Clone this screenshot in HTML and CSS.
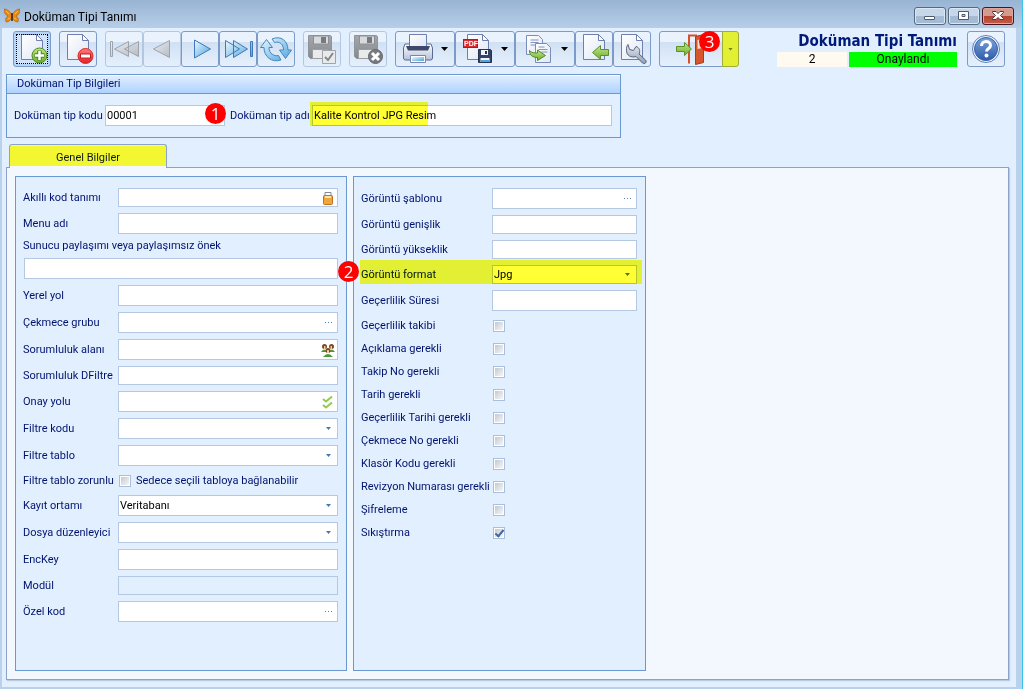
FILE: index.html
```html
<!DOCTYPE html>
<html lang="tr">
<head>
<meta charset="utf-8">
<title>Doküman Tipi Tanımı</title>
<link rel="stylesheet" href="styles.css">
</head>
<body>
<svg class="defs" aria-hidden="true">
  <defs>
    <linearGradient id="gBlue" x1="0" y1="0" x2="1" y2="1"><stop offset="0" stop-color="#eef9ff"/><stop offset="1" stop-color="#4aa3df"/></linearGradient>
    <linearGradient id="gGray" x1="0" y1="0" x2="1" y2="1"><stop offset="0" stop-color="#eceef1"/><stop offset="1" stop-color="#b5bbc3"/></linearGradient>
    <linearGradient id="gPage" x1="0" y1="0" x2="1" y2="1"><stop offset="0" stop-color="#ffffff"/><stop offset="1" stop-color="#dfe6f4"/></linearGradient>
    <linearGradient id="gGreen" x1="0" y1="0" x2="0" y2="1"><stop offset="0" stop-color="#c3e58d"/><stop offset="1" stop-color="#6cae2c"/></linearGradient>
    <linearGradient id="gRed" x1="0" y1="0" x2="0" y2="1"><stop offset="0" stop-color="#ff7b7b"/><stop offset="1" stop-color="#e31f25"/></linearGradient>
    <linearGradient id="gDisk" x1="0" y1="0" x2="0" y2="1"><stop offset="0" stop-color="#a4a8ac"/><stop offset="1" stop-color="#85898d"/></linearGradient>
    <linearGradient id="gSteel" x1="0" y1="0" x2="0" y2="1"><stop offset="0" stop-color="#ffffff"/><stop offset="1" stop-color="#b4c0da"/></linearGradient>
    <linearGradient id="gWrench" x1="0" y1="0" x2="0" y2="1"><stop offset="0" stop-color="#e6ebf2"/><stop offset="1" stop-color="#8e9db4"/></linearGradient>
    <linearGradient id="gHelp" x1="0" y1="0" x2="0" y2="1"><stop offset="0" stop-color="#7fa3d8"/><stop offset="1" stop-color="#2a5cab"/></linearGradient>
    <symbol id="page" viewBox="0 0 32 32"><path d="M5.500 1.500h15l6 6v19h-21z" fill="url(#gPage)" stroke="#6d7fae"/><path d="M20.500 1.500v6h6z" fill="#fff" stroke="#6d7fae"/></symbol>
    <symbol id="disk" viewBox="0 0 32 32"><path d="M2.500 2.500h22l1 1v22h-21l-2-2z" fill="url(#gDisk)" stroke="#909498"/><path d="M7.500 3h15v8h-15z" fill="#d8dadd" stroke="#8b8f93"/><path d="M15 4h5v6h-5z" fill="#777b80"/><path d="M6.500 16.500h15v9h-15z" fill="#e8eaec" stroke="#9a9ea2"/></symbol>
  </defs>
</svg>
<div class="window">
  <header class="titlebar">
    <svg class="logo" viewBox="0 0 16 16"><path d="M8 7C6 3 3 1 0 1c0 3 1 6 4 7-2 1-3 3-2 6 3 0 5-2 6-5 1 3 3 5 6 5 1-3 0-5-2-6 3-1 4-4 4-7-3 0-6 2-8 6z" fill="#e98a17" stroke="#a85a0c" stroke-width=".6"/><path d="M2 3l3 3M14 3l-3 3M4 11l2-1M12 11l-2-1" fill="none" stroke="#ffc24a"/><path d="M8 5v8" stroke="#35210e" stroke-width="1.500"/></svg>
    <h1 class="title">Doküman Tipi Tanımı</h1>
    <div class="winbtns">
      <button class="winbtn" aria-label="Simge durumuna küçült"><svg viewBox="0 0 30 16"><rect x="9.500" y="8.500" width="10" height="3" rx=".5" fill="#fff" stroke="#4b5a70"/></svg></button>
      <button class="winbtn" aria-label="Ekranı kapla"><svg viewBox="0 0 30 16"><path d="M9.500 3.500h10v8h-10zM13 6.500v2h3v-2z" fill="#fff" fill-rule="evenodd" stroke="#4b5a70"/></svg></button>
      <button class="winbtn close" aria-label="Kapat"><svg viewBox="0 0 30 16"><path d="M9.500 3.500h3.500l2 2 2-2h3.500v1l-3 3 3 3v1H17l-2-2-2 2H9.500v-1l3-3-3-3z" fill="#fff" stroke="#5a3038"/></svg></button>
    </div>
  </header>

  <main class="client">
    <div class="toolbar">
      <button class="tool active" aria-label="Yeni"><svg viewBox="0 0 32 32"><use href="#page"/><circle cx="23.500" cy="22.500" r="7.500" fill="url(#gGreen)" stroke="#4a8a1c"/><path d="M23.500 17.500v10M18.500 22.500h10" stroke="#4a8a1c" stroke-width="4.500"/><path d="M23.500 18v9M19 22.500h9" stroke="#fff" stroke-width="2.500"/></svg></button>
      <button class="tool" aria-label="Sil"><svg viewBox="0 0 32 32"><use href="#page"/><circle cx="23.500" cy="23" r="7.500" fill="url(#gRed)" stroke="#d8282c"/><rect x="18.500" y="21" width="10" height="4" fill="#fff" stroke="#c01c20"/></svg></button>
      <div class="group">
        <button class="tool" disabled aria-label="İlk"><svg viewBox="0 0 32 32"><path d="M2.500 8.500h2v15h-2zM20.500 8.500v15l-14-7.500zM30.500 8.500v15l-14-7.500z" fill="url(#gGray)" stroke="#9ca3ac"/></svg></button>
        <button class="tool" disabled aria-label="Önceki"><svg viewBox="0 0 32 32"><path d="M23.500 7.500v17l-16-8.500z" fill="url(#gGray)" stroke="#9ca3ac"/></svg></button>
        <button class="tool" aria-label="Sonraki"><svg viewBox="0 0 32 32"><path d="M10.500 7v18l16-9z" fill="url(#gBlue)" stroke="#3f79b8"/></svg></button>
        <button class="tool" aria-label="Son"><svg viewBox="0 0 32 32"><path d="M3.500 7.500v17l14-8.500zM11.500 7.500v17l14-8.500zM28.500 8.500h2v15h-2z" fill="url(#gBlue)" stroke="#3f79b8"/></svg></button>
        <button class="tool" aria-label="Yenile"><svg viewBox="0 0 32 32"><path d="M6.500 6.500l6 8H9c0 6 5 9 9.500 8l2.500 4.500C12 30 4 24 4 14.500H.5zM12 6c9-4 16 2 16 11h3.500l-6 8.500-6-8.500h4c0-6-4-9-9-7.500z" fill="url(#gBlue)" stroke="#4388bd"/></svg></button>
      </div>
      <button class="tool" disabled aria-label="Kaydet"><svg viewBox="0 0 32 32"><use href="#disk"/><path d="M16.500 17.500h13v13h-13z" fill="#e9eaec" stroke="#a0a4a8"/><path d="M19 24l3 3 5-7" fill="none" stroke="#83878c" stroke-width="2"/></svg></button>
      <button class="tool" disabled aria-label="Vazgeç"><svg viewBox="0 0 32 32"><use href="#disk"/><circle cx="23.500" cy="23.500" r="7" fill="#777b80" stroke="#63676c"/><path d="M20 20l7 7M27 20l-7 7" stroke="#fff" stroke-width="3"/></svg></button>
      <div class="group">
        <button class="tool wide" aria-label="Yazdır"><svg viewBox="0 0 32 32"><path d="M3 11h26l1.500 4v10q0 2-2 2h-25q-2 0-2-2V15z" fill="url(#gSteel)" stroke="#5a6a92"/><path d="M7.500 1.500h17v12h-17z" fill="url(#gPage)" stroke="#6d7fae"/><path d="M4 13h24l-2 4.500H6z" fill="#3d486b"/><path d="M8.500 22.500h15v7h-15z" fill="#fff" stroke="#7887aa"/><path d="M10 24h12v4H10z" fill="url(#gBlue)"/></svg><span class="arrow"></span></button>
        <button class="tool wide" aria-label="PDF kaydet"><svg viewBox="0 0 32 32"><use href="#page"/><rect x="1.500" y="6.500" width="14" height="8" fill="#d92b30" stroke="#a81c22"/><text class="pdf" x="2" y="13">PDF</text><path d="M16.500 16.500h12l1 1v12h-13z" fill="#344266" stroke="#27324f"/><path d="M19 17h7v5h-7zM18.500 25h9v4h-9z" fill="#eef5ff"/><path d="M23 18h2v3h-2z" fill="#27324f"/><path d="M19 27h8v2h-8z" fill="#49a6e5"/></svg><span class="arrow"></span></button>
        <button class="tool wide" aria-label="Kopyala"><svg viewBox="0 0 32 32"><path d="M4.500 2.500h12l4 4v15h-16z" fill="url(#gPage)" stroke="#7b8cb8"/><path d="M8.500 7h8M8.500 9.500h8M8.500 12h8" stroke="#7f93c4"/><path d="M13.500 10.500h11l4 4v15h-15z" fill="url(#gPage)" stroke="#7b8cb8"/><path d="M16.500 14h6M16.500 16.500h9M19.500 19h6" stroke="#7f93c4"/><path d="M7.500 17.500c2 2.500 5 2.500 8 2.500v-3l8 5.500-8 5v-3c-5 0-8-2.500-8-7z" fill="url(#gGreen)" stroke="#4e8a22"/></svg><span class="arrow"></span></button>
        <button class="tool" aria-label="İçe al"><svg viewBox="0 0 32 32"><use href="#page"/><path d="M14.500 19.500l8-7v4h8v6h-8v4z" fill="url(#gGreen)" stroke="#579329"/></svg></button>
        <button class="tool" aria-label="Ayarlar"><svg viewBox="0 0 32 32"><use href="#page"/><path d="M12 11.500l1.500 5 4 1 2.500-4c3.500 1 4.500 4.500 3 7.500l6.500 6c2 2-1 5-3 3l-6.500-6.500c-5 1.500-9.500-1-9.500-6 0-3 0-4 1.500-6z" fill="url(#gWrench)" stroke="#56647a"/></svg></button>
      </div>
      <div class="exit">
        <button class="tool exit-main" aria-label="Çıkış"><svg viewBox="0 0 32 32"><path d="M14 30.500V2.500h8" fill="none" stroke="#d7502c" stroke-width="2"/><path d="M20.500 3.500l8-2v28l-8 2z" fill="#d8542c" stroke="#a93b1b"/><path d="M22.500 7l5-1v9l-5 1z" fill="#e8ded0"/><path d="M1.500 13.500h8v-4l7 6.500-7 6.500v-4h-8z" fill="url(#gGreen)" stroke="#579329"/></svg></button>
        <button class="tool exit-drop" aria-label="Çıkış seçenekleri"><span class="arrow small"></span></button>
        <span class="badge badge-exit">3</span>
      </div>
      <div class="status">
        <h2 class="status-title">Doküman Tipi Tanımı</h2>
        <div class="status-row"><span class="status-no">2</span><span class="status-ok">Onaylandı</span></div>
      </div>
      <button class="tool" aria-label="Yardım"><svg viewBox="0 0 32 32"><circle cx="16" cy="16" r="13.500" fill="#f4f8ff" stroke="#5c7fb9"/><circle cx="16" cy="16" r="11.500" fill="url(#gHelp)" stroke="#3462a8"/><path d="M11.500 13c0-6 9-6 9-.5 0 3-4 3-4 6" fill="none" stroke="#fff" stroke-width="3"/><circle cx="16.500" cy="22.500" r="2" fill="#fff"/></svg></button>
    </div>

    <section class="info">
      <h3 class="info-head">Doküman Tip Bilgileri</h3>
      <div class="info-body">
        <label class="info-label" for="kod">Doküman tip kodu</label>
        <div class="code-cell"><input class="field" id="kod" type="text" value="00001"><span class="badge badge-code">1</span></div>
        <label class="info-label second" for="ad">Doküman tip adı</label>
        <div class="name-cell"><input class="field" id="ad" type="text" value="Kalite Kontrol JPG Resim"><span class="mark mark-name"></span></div>
      </div>
    </section>

    <div class="tabs"><button class="tab">Genel Bilgiler</button></div>
    <div class="sheet">
      <section class="panel left">
        <div class="row short"><label for="f1">Akıllı kod tanımı</label><div class="cell"><input class="field" id="f1" type="text"><svg class="adorn" viewBox="0 0 14 14"><path d="M4 5V1.500h6V5" fill="#fff" stroke="#7e8a9c"/><rect x="2.500" y="4.500" width="9" height="9" rx="1" fill="#f0a63c" stroke="#bb7320"/><path d="M4 6h6" stroke="#ffe3a8" stroke-width="2"/></svg></div></div>
        <div class="row"><label for="f2">Menu adı</label><div class="cell"><input class="field" id="f2" type="text"></div></div>
        <label class="caption" for="f3">Sunucu paylaşımı veya paylaşımsız önek</label>
        <div class="row full"><div class="cell"><input class="field" id="f3" type="text"></div></div>
        <div class="row"><label for="f4">Yerel yol</label><div class="cell"><input class="field" id="f4" type="text"></div></div>
        <div class="row"><label for="f5">Çekmece grubu</label><div class="cell"><input class="field" id="f5" type="text"><span class="dots"></span></div></div>
        <div class="row"><label for="f6">Sorumluluk alanı</label><div class="cell"><input class="field" id="f6" type="text"><svg class="adorn" viewBox="0 0 14 14"><path d="M0 9q3-5 6 0zM8 9q3-5 6 0zM2 14q5-6 10 0z" fill="#489a3a"/><circle cx="3.500" cy="3.500" r="2.500" fill="#7c4a22"/><circle cx="10.500" cy="3.500" r="2.500" fill="#7c4a22"/><circle cx="7" cy="7.500" r="2.500" fill="#7c4a22"/><path d="M3 3h1.500v3H3zM9.500 3H11v3H9.500zM6 7h2v3H6z" fill="#f0c89a"/></svg></div></div>
        <div class="row short"><label for="f7">Sorumluluk DFiltre</label><div class="cell"><input class="field" id="f7" type="text"></div></div>
        <div class="row"><label for="f8">Onay yolu</label><div class="cell"><input class="field" id="f8" type="text"><svg class="adorn" viewBox="0 0 14 14"><path d="M2 4l3 2.500L11 1.500M2 10l3 2.500L11 7.500" fill="none" stroke="#95c94e" stroke-width="2"/></svg></div></div>
        <div class="row"><label for="f9">Filtre kodu</label><div class="cell"><select class="field" id="f9"><option></option></select><span class="arrow small"></span></div></div>
        <div class="row"><label for="f10">Filtre tablo</label><div class="cell"><select class="field" id="f10"><option></option></select><span class="arrow small"></span></div></div>
        <div class="row check"><label for="f11">Filtre tablo zorunlu</label><div class="cell"><input class="box" id="f11" type="checkbox"><label class="after" for="f11">Sedece seçili tabloya bağlanabilir</label></div></div>
        <div class="row"><label for="f12">Kayıt ortamı</label><div class="cell"><select class="field" id="f12"><option>Veritabanı</option></select><span class="arrow small"></span></div></div>
        <div class="row"><label for="f13">Dosya düzenleyici</label><div class="cell"><select class="field" id="f13"><option></option></select><span class="arrow small"></span></div></div>
        <div class="row"><label for="f14">EncKey</label><div class="cell"><input class="field" id="f14" type="text"></div></div>
        <div class="row short"><label for="f15">Modül</label><div class="cell"><input class="field" id="f15" type="text" disabled></div></div>
        <div class="row"><label for="f16">Özel kod</label><div class="cell"><input class="field" id="f16" type="text"><span class="dots"></span></div></div>
      </section>
      <section class="panel right">
        <div class="row"><label for="g1">Görüntü şablonu</label><div class="cell"><input class="field" id="g1" type="text"><span class="dots"></span></div></div>
        <div class="row short"><label for="g2">Görüntü genişlik</label><div class="cell"><input class="field" id="g2" type="text"></div></div>
        <div class="row short"><label for="g3">Görüntü yükseklik</label><div class="cell"><input class="field" id="g3" type="text"></div></div>
        <div class="row short"><label for="g4">Görüntü format</label><div class="cell"><select class="field" id="g4"><option>Jpg</option></select><span class="arrow small"></span></div><span class="mark mark-format"></span><span class="badge badge-format">2</span></div>
        <div class="row"><label for="g5">Geçerlilik Süresi</label><div class="cell"><input class="field" id="g5" type="text"></div></div>
        <div class="row check"><label for="g6">Geçerlilik takibi</label><div class="cell"><input class="box" id="g6" type="checkbox"></div></div>
        <div class="row check"><label for="g7">Açıklama gerekli</label><div class="cell"><input class="box" id="g7" type="checkbox"></div></div>
        <div class="row check"><label for="g8">Takip No gerekli</label><div class="cell"><input class="box" id="g8" type="checkbox"></div></div>
        <div class="row check"><label for="g9">Tarih gerekli</label><div class="cell"><input class="box" id="g9" type="checkbox"></div></div>
        <div class="row check"><label for="g10">Geçerlilik Tarihi gerekli</label><div class="cell"><input class="box" id="g10" type="checkbox"></div></div>
        <div class="row check"><label for="g11">Çekmece No gerekli</label><div class="cell"><input class="box" id="g11" type="checkbox"></div></div>
        <div class="row check"><label for="g12">Klasör Kodu gerekli</label><div class="cell"><input class="box" id="g12" type="checkbox"></div></div>
        <div class="row check"><label for="g13">Revizyon Numarası gerekli</label><div class="cell"><input class="box" id="g13" type="checkbox"></div></div>
        <div class="row check"><label for="g14">Şifreleme</label><div class="cell"><input class="box" id="g14" type="checkbox"></div></div>
        <div class="row check"><label for="g15">Sıkıştırma</label><div class="cell"><input class="box" id="g15" type="checkbox" checked></div></div>
      </section>
    </div>
  </main>
</div>
</body>
</html>
```
FILE: styles.css
```css
* { box-sizing: border-box; }
body, h1, h2, h3 { margin: 0; font-weight: normal; }
body, button, input, select { font-family: Tahoma, Roboto, "Noto Sans", sans-serif; font-size: 11px; }
body { color: #00136e; }
.defs { position: absolute; width: 0; height: 0; }

.window { min-height: 100vh; display: flex; flex-direction: column; background: #b9d1ea; border-right: 1px solid #35c6f0; padding: 0 6px 2px 2px; }
.titlebar { height: 28px; margin: 0 -6px 0 -2px; padding: 5px 8px 0 4px; display: flex; align-items: flex-start; gap: 4px; background: linear-gradient(#98b4d3, #b7cee8); color: #000; }
.logo { width: 16px; height: 16px; margin-top: 3px; }
.title { flex: 1; font-size: 12px; line-height: 24px; }
.winbtns { display: flex; gap: 2px; padding-top: 2px; }
.winbtn { width: 32px; height: 18px; padding: 0; border: 1px solid #55697f; border-radius: 3px; background: linear-gradient(#c6d7e9 50%, #a5bbd3 50%); box-shadow: inset 0 0 0 1px #dbe7f3; }
.winbtn svg { display: block; width: 30px; height: 16px; }
.close { border-color: #471420; background: linear-gradient(#d59a8e 48%, #b3432f 50%, #c25c47); box-shadow: inset 0 0 0 1px #dfa79c; }

.client { flex: 1; display: flex; flex-direction: column; background: #e2efff; padding: 3px 7px 7px 4px; }
.toolbar { display: flex; align-items: flex-start; padding: 0 4px 0 7px; gap: 8px; height: 43px; }
.group, .exit { display: flex; position: relative; }
.tool { width: 38px; height: 36px; padding: 0; display: flex; align-items: center; justify-content: center; border: 1px solid #7c9bc8; border-radius: 3px; background: linear-gradient(#e9f2fd 0 28%, #d0e0f3 28%, #e6f0fc); }
.tool svg { width: 32px; height: 32px; flex: none; }
.tool:disabled { border-color: #b4c7e0; }
.tool.active { background: #cfe3fa; box-shadow: inset 0 0 0 2px #b4d5f6; outline: 1px dotted #000; outline-offset: -4px; }
.wide { width: 60px; justify-content: flex-start; padding-left: 6px; gap: 7px; }
.arrow { width: 7px; height: 4px; background: #000; clip-path: polygon(0 0, 100% 0, 50% 100%); }
.arrow.small { width: 5px; height: 3px; background: #4677b0; }
.exit-main { width: 64px; border-radius: 3px 0 0 3px; }
.exit-drop { width: 17px; margin-left: -1px; border-radius: 0 3px 3px 0; background: #e3ef33; border-color: #a2ad35; }
.exit-drop .arrow { background: #667d21; }
.pdf { font: bold 7px "Liberation Sans", sans-serif; fill: #fff; }
.status { margin-left: auto; margin-right: 2px; width: 180px; }
.status-title { font-family: Tahoma, "DejaVu Sans Condensed", "DejaVu Sans", sans-serif; font-size: 15px; font-weight: bold; line-height: 20px; text-align: right; white-space: nowrap; color: #001a7a; }
.status-row { display: flex; gap: 2px; color: #000; text-align: center; font-size: 12px; line-height: 15px; padding-top: 1px; }
.status-no { flex: 70; background: #fffaf0; }
.status-ok { flex: 108; background: #0f0; }

.badge { position: absolute; z-index: 2; width: 21px; height: 21px; border-radius: 50%; background: #f00; color: #fff; text-align: center; font: 17px/21px "Open Sans", sans-serif; }
.badge-exit { left: 40px; top: 0; }
.badge-code { right: -1px; top: -2px; }
.badge-format { left: -23px; top: -4px; }
.mark { position: absolute; background: #ff3; mix-blend-mode: multiply; pointer-events: none; }
.mark-name { left: -2px; top: -3px; bottom: 0; width: 118px; }
.mark-format { left: -1px; right: -5px; top: -5px; bottom: 0; }

.info { width: 615px; max-width: 100%; border: 1px solid #6a98d2; }
.info-head { height: 19px; padding-left: 10px; font-size: 11px; line-height: 18px; border-bottom: 1px solid #6a98d2; background: linear-gradient(#e3efff, #afd2ff); box-shadow: inset 0 1px #fff; }
.info-body { display: flex; align-items: center; padding: 11px 8px 11px 7px; }
.info-label { width: 91px; white-space: nowrap; }
.second { width: 87px; padding-left: 5px; }
.code-cell { position: relative; width: 120px; height: 21px; }
.name-cell { position: relative; flex: 1; height: 21px; }

.field { appearance: none; display: block; width: 100%; height: 100%; margin: 0; border: 1px solid #b4c8e3; border-radius: 0; background: #fff; color: #000; padding: 0 1px; }
.field:disabled { background: #e2efff; }

.tabs { display: flex; padding: 6px 0 0 3px; }
.tab { width: 158px; height: 24px; padding: 2px 0 0; margin-bottom: -1px; border: 1px solid #8ba3cb; border-bottom: 0; border-radius: 3px 3px 0 0; background: linear-gradient(#e3efff 1px, #f3f731 1px 21px, #f3f8ff 21px); color: #0b1a20; position: relative; }
.sheet { flex: 1; display: flex; gap: 6px; padding: 8px; border: 1px solid #8ba3cb; background: #f3f8ff; box-shadow: 1px 1px 1px #b9cbe3; }
.panel { border: 1px solid #6a98d2; background: #e2efff; padding: 11px 8px 11px 7px; display: flex; flex-direction: column; gap: 6px; }
.left { width: 332px; --label: 95px; }
.right { width: 293px; --label: 131px; }
.row { position: relative; display: grid; grid-template-columns: var(--label) 1fr; align-items: center; height: 21px; white-space: nowrap; }
.short { height: 19px; }
.check { height: 17px; }
.full { grid-template-columns: 1fr; padding-left: 1px; }
.caption { line-height: 12px; }
.cell { position: relative; height: 100%; display: flex; align-items: center; }
.cell .arrow { position: absolute; right: 7px; }
.adorn { position: absolute; right: 3px; width: 14px; height: 14px; }
.dots { position: absolute; right: 6px; width: 7px; height: 1px; background: repeating-linear-gradient(90deg, #5b7fb5 0 1px, transparent 1px 3px); }
.box { appearance: none; width: 12px; height: 12px; margin: 0 0 0 1px; border: 1px solid #a9bfdd; background: linear-gradient(135deg, #c3c9d1, #f6f6f6) content-box, #fff; padding: 1px; position: relative; }
.box:checked::after { content: ""; position: absolute; left: 3px; top: 0; width: 3px; height: 7px; border: solid #3f669f; border-width: 0 2px 2px 0; transform: rotate(40deg); }
.after { padding-left: 5px; }
```
